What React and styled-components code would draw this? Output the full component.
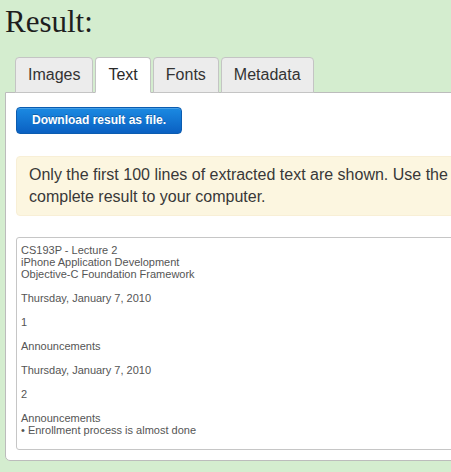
import React from "react";
import styled, { createGlobalStyle } from "styled-components";

const Global = createGlobalStyle`
  html, body {
    margin: 0;
    padding: 0;
    overflow: hidden;
    background: #d4edcf;
  }
  body {
    font-family: "Liberation Sans", Arial, Helvetica, sans-serif;
  }
`;

const Page = styled.div`
  padding: 2px 0 0 5px;
  width: 900px;
`;

const Heading = styled.h1`
  margin: 0;
  font-family: Georgia, "Liberation Serif", serif;
  font-weight: normal;
  font-size: 31px;
  line-height: 40px;
  color: #1e1e1e;
`;

const TabBar = styled.div`
  display: flex;
  margin-top: 15px;
  padding-left: 10px;
  margin-bottom: -1px;
  position: relative;
  z-index: 1;
`;

const Tab = styled.div`
  padding: 7px 12px;
  margin-right: 2px;
  font-size: 16px;
  line-height: 20px;
  color: ${(p) => (p.$active ? "#2a2a2a" : "#333")};
  background: ${(p) => (p.$active ? "#fff" : "#ececec")};
  border: 1px solid #c4c4c4;
  border-bottom-color: ${(p) => (p.$active ? "#fff" : "#c4c4c4")};
  border-radius: 4px 4px 0 0;
`;

const Panel = styled.div`
  width: 820px;
  background: #fff;
  border: 1px solid #bcbcbc;
  border-radius: 0 0 0 5px;
  padding: 14px 10px 10px 10px;
  display: flex;
  flex-direction: column;
  align-items: flex-start;
`;

const Button = styled.button`
  height: 27px;
  padding: 0 15px;
  border: 1px solid #0b5cb0;
  border-radius: 4px;
  background: linear-gradient(#1b8ae2, #0a60c2);
  color: #fff;
  font-family: "Liberation Sans", Arial, Helvetica, sans-serif;
  font-weight: bold;
  font-size: 12px;
  line-height: 25px;
  text-shadow: 0 -1px 0 rgba(0, 0, 0, 0.25);
  box-shadow: inset 0 1px 0 rgba(255, 255, 255, 0.2);
  cursor: pointer;
`;

const Alert = styled.div`
  align-self: stretch;
  margin-top: 22px;
  padding: 7px 12px;
  background: #fcf6e0;
  border: 1px solid #f8efd6;
  border-radius: 4px;
  font-size: 16px;
  line-height: 22px;
  color: #383838;
  white-space: nowrap;
`;

const TextBox = styled.div`
  align-self: stretch;
  box-sizing: border-box;
  height: 213px;
  margin-top: 21px;
  padding: 6px 4px;
  border: 1px solid #c6c6c6;
  border-radius: 3px;
  overflow: hidden;
  font-size: 11px;
  line-height: 12px;
  color: #555;
  white-space: pre-wrap;
`;

const lines = [
  "CS193P - Lecture 2",
  "iPhone Application Development",
  "Objective-C Foundation Framework",
  "",
  "Thursday, January 7, 2010",
  "",
  "1",
  "",
  "Announcements",
  "",
  "Thursday, January 7, 2010",
  "",
  "2",
  "",
  "Announcements",
  "• Enrollment process is almost done",
];

export default function App() {
  const tabs = ["Images", "Text", "Fonts", "Metadata"];
  return (
    <>
      <Global />
      <Page>
        <Heading>Result:</Heading>
        <TabBar>
          {tabs.map((t) => (
            <Tab key={t} $active={t === "Text"}>
              {t}
            </Tab>
          ))}
        </TabBar>
        <Panel>
          <Button>Download result as file.</Button>
          <Alert>
            Only the first 100 lines of extracted text are shown. Use the button above to download the
            <br />
            complete result to your computer.
          </Alert>
          <TextBox>{lines.join("\n")}</TextBox>
        </Panel>
      </Page>
    </>
  );
}
